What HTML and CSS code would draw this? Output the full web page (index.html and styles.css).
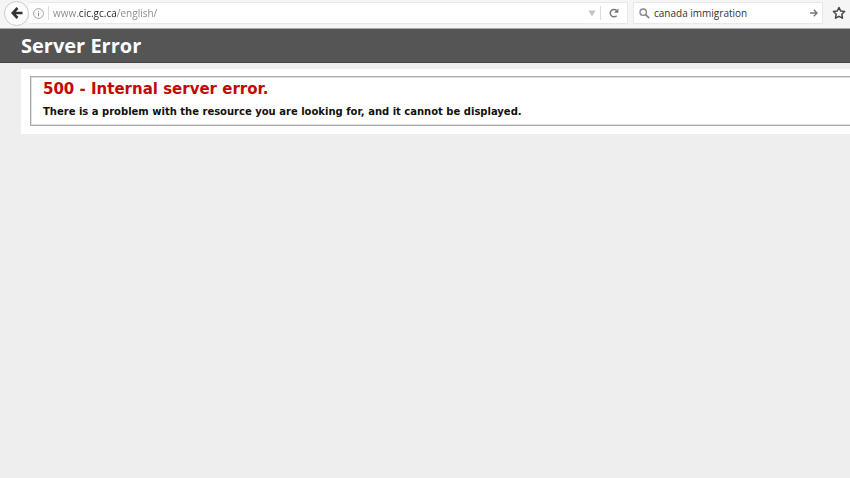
FILE: index.html
```
<!DOCTYPE html>
<html lang="en">
  <head>
    <meta charset="UTF-8" />
    <meta name="viewport" content="width=device-width, initial-scale=1.0" />
    <title>500 - Internal server error.</title>
    <link rel="stylesheet" href="styles.css">
  </head>
  <body>
    <div class="toolbar">
      <button type="button" class="back-btn" aria-label="Back">
        <svg width="12" height="12" viewBox="0 0 12 12">
          <path d="M6.5 1 L1.8 6 L6.5 11 M2 6 H11.5" fill="none" stroke="#333" stroke-width="2.6" />
        </svg>
      </button>
      <div class="url-bar">
        <button type="button" class="icon-btn" aria-label="Site information">
          <svg width="11" height="11" viewBox="0 0 11 11">
            <circle cx="5.5" cy="5.5" r="4.9" fill="none" stroke="#999" stroke-width="0.9" />
            <path d="M5.5 4.7 V8.3 M5.5 2.7 V3.7" stroke="#888" stroke-width="1.1" />
          </svg>
        </button>
        <span class="divider"></span>
        <input type="text" class="url-input" aria-label="Address" value="www.cic.gc.ca/english/" />
        <button type="button" class="icon-btn" aria-label="Show history">
          <svg width="8" height="7" viewBox="0 0 8 7">
            <path d="M0.5 0.5 H7.5 L4 6.5 Z" fill="#c4c4c4" />
          </svg>
        </button>
        <span class="divider"></span>
        <button type="button" class="icon-btn reload-btn" aria-label="Reload">
          <svg width="10" height="10" viewBox="0 0 10 10">
            <path d="M7.6 7.7 A3.7 3.7 0 1 1 7.6 2.5" fill="none" stroke="#777" stroke-width="1.5" />
            <path d="M9.4 0.4 V4.8 H5 Z" fill="#777" />
          </svg>
        </button>
      </div>
      <form class="search-bar">
        <svg width="11" height="11" viewBox="0 0 11 11">
          <circle cx="4.2" cy="4.2" r="3.2" fill="none" stroke="#888" stroke-width="1.3" />
          <path d="M6.6 6.6 L10.2 10.2" stroke="#888" stroke-width="1.8" />
        </svg>
        <input type="text" class="search-input" aria-label="Search" value="canada immigration" />
        <button type="submit" class="icon-btn" aria-label="Go">
          <svg width="8" height="8" viewBox="0 0 8 8">
            <path d="M0 4 H7 M3.8 0.8 L7 4 L3.8 7.2" fill="none" stroke="#777" stroke-width="1.4" />
          </svg>
        </button>
      </form>
      <button type="button" class="icon-btn star-btn" aria-label="Bookmark this page">
        <svg width="14" height="14" viewBox="0 0 14 14">
          <path d="M7 1.5 L8.7 5 L12.6 5.5 L9.8 8.2 L10.5 12.2 L7 10.3 L3.5 12.2 L4.2 8.2 L1.4 5.5 L5.3 5 Z" fill="none" stroke="#444" stroke-width="1.5" stroke-linejoin="round" />
        </svg>
      </button>
    </div>

    <header class="header">
      <h1>Server Error</h1>
    </header>

    <main class="content">
      <div class="error-box">
        <h2>500 - Internal server error.</h2>
        <h3>There is a problem with the resource you are looking for, and it cannot be displayed.</h3>
      </div>
    </main>
  </body>
</html>
```
FILE: styles.css
```
:root {
  --page: #eeeeee;
  --chrome: #f5f5f5;
  --header: #555555;
  --line: #e8e8e8;
  --error: #c40808;
}

* {
  margin: 0;
  padding: 0;
  box-sizing: border-box;
}

body {
  font-family: "DejaVu Sans", Verdana, sans-serif;
  background-color: var(--page);
  overflow-x: hidden;
}

/* Browser toolbar */
.toolbar {
  display: flex;
  align-items: center;
  height: 29px;
  padding: 0 4px 2px;
  background-color: var(--chrome);
  border-bottom: 1px solid #aaaaaa;
}

button {
  border: none;
  background: none;
  cursor: pointer;
}

.back-btn,
.icon-btn {
  display: flex;
  align-items: center;
  justify-content: center;
  flex-shrink: 0;
}

.back-btn {
  width: 25px;
  height: 25px;
  border: 1px solid #cccccc;
  border-radius: 50%;
  background-color: #fcfcfc;
}

.url-bar,
.search-bar {
  display: flex;
  align-items: center;
  height: 22px;
  background-color: #ffffff;
  border: 1px solid var(--line);
}

.url-bar {
  flex: 1;
  gap: 4px;
  padding: 0 8px 0 4px;
  border-left: none;
}

.divider {
  width: 1px;
  height: 14px;
  background-color: #dddddd;
}

.url-input,
.search-input {
  flex: 1;
  min-width: 0;
  border: none;
  outline: none;
  background-color: transparent;
  font-family: "Open Sans", "Segoe UI", sans-serif;
  font-size: 10px;
  line-height: 16px;
  color: #333333;
}

/* The domain is darker than the rest of the address */
.url-input {
  background-image: linear-gradient(
    to right,
    #888888 25px,
    #222222 25px,
    #222222 64px,
    #888888 64px
  );
  -webkit-background-clip: text;
  background-clip: text;
  color: transparent;
}

.reload-btn {
  padding-left: 4px;
}

.search-bar {
  width: 190px;
  margin-left: 5px;
  gap: 4px;
  padding: 0 4px 0 5px;
}

.star-btn {
  margin-left: 9px;
}

/* Error page */
.header {
  padding: 5px 21px 4px;
  background-color: var(--header);
  border-bottom: 1px solid #444444;
}

.header h1 {
  font-family: "Trebuchet MS", "Open Sans", sans-serif;
  font-size: 20px;
  font-weight: 700;
  line-height: 24px;
  color: #ffffff;
}

.content {
  margin: 6px 0 0 21px;
  padding: 7px 0 8px 9px;
  background-color: #ffffff;
}

.error-box {
  padding: 3px 12px 7px;
  border: 1px solid #aaaaaa;
  border-right: none;
  box-shadow: inset 1px 1px 0 #e0e0e0, inset 0 -1px 0 #e0e0e0;
}

.error-box h2 {
  font-size: 15px;
  line-height: 18px;
  color: var(--error);
}

.error-box h3 {
  margin-top: 8px;
  font-size: 10px;
  line-height: 12px;
  color: #111111;
}
```
